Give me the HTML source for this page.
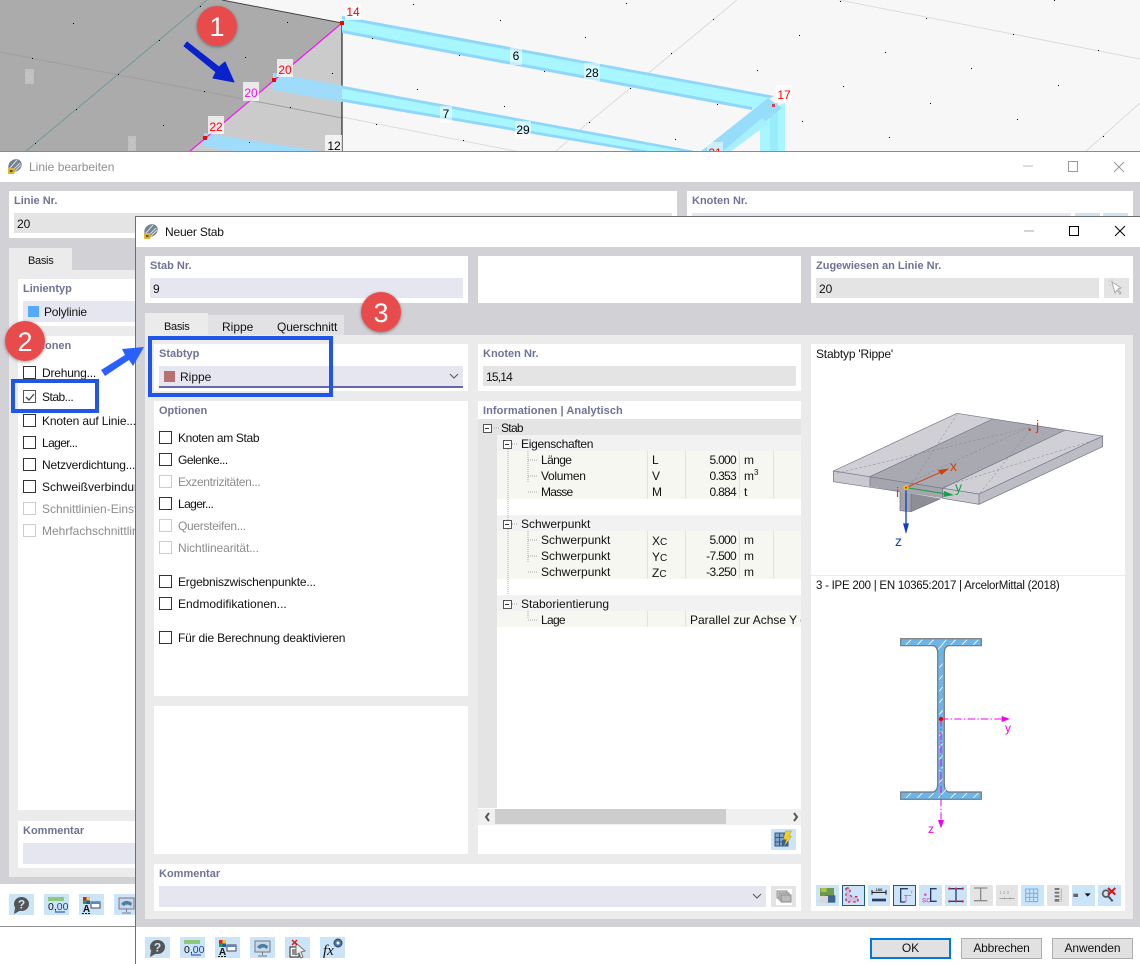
<!DOCTYPE html>
<html><head><meta charset="utf-8"><style>
html,body{margin:0;padding:0;background:#fff}
#p{position:relative;width:1140px;height:964px;overflow:hidden;font-family:"Liberation Sans",sans-serif;font-size:12px;color:#111;background:#fff}
#p div{position:absolute;box-sizing:border-box}
.t{white-space:nowrap;line-height:16px;height:16px}
.r{margin-top:1px}
.l{white-space:nowrap;line-height:16px;height:16px;font-weight:bold;font-size:11px;color:#6d7399;margin-top:1px}
.w{background:#fff}
.i{background:#e6e6f0}
.g{background:#e4e4e4}
.c{width:13px;height:13px;border:1px solid #333;background:#fff}
.d{width:13px;height:13px;border:1px solid #ccc;background:#fff}
.m{color:#8c8c8c}
.b{background:#cbe4f8}
.n{background:#e1e1e1}
.v{width:51px;text-align:right;letter-spacing:-.7px}
svg{position:absolute;left:0;top:0}
</style></head><body><div id="p">
<svg width="1140" height="152" viewBox="0 0 1140 152" style="z-index:0">
<rect width="1140" height="152" fill="#f7f7f7"/>
<polygon points="0,0 222,0 342,23 189,152 0,152" fill="#ababab"/>
<polygon points="342,23 342,152 189,152" fill="#cbcbcb"/>
<g stroke="#dcdcdc" stroke-width="1" fill="none"><line x1="839" y1="0" x2="1140" y2="59"/><line x1="737" y1="0" x2="588" y2="123"/><line x1="588" y1="123" x2="555" y2="152"/><line x1="1140" y1="103" x2="1085" y2="152"/><line x1="342" y1="117" x2="520" y2="152"/></g>
<line x1="0" y1="52" x2="342" y2="118" stroke="#9f9f9f"/>
<line x1="207" y1="0" x2="25" y2="152" stroke="#6f9c9c"/>
<line x1="222" y1="0" x2="342" y2="23" stroke="#444"/>
<line x1="342" y1="23" x2="342" y2="152" stroke="#000"/>
<polygon points="342,16 774,96 752,110 342,33" fill="#a8f6ff"/>
<polygon points="342,16 774,96 770,98 342,19" fill="#8fd6fb"/>
<polygon points="342,30 752,107 752,110 342,33" fill="#8fd6fb"/>
<polygon points="273,73 700,152 640,152 273,90" fill="#a8f6ff"/>
<polygon points="273,73 700,152 686,152 273,76" fill="#8fd6fb"/>
<polygon points="273,87 655,152 640,152 273,90" fill="#8fd6fb"/>
<polygon points="273,73 342,86 342,102 273,90" fill="#9fdcfb"/>
<polygon points="204,133 325,152 240,152 204,147" fill="#9fdcfb"/>
<polygon points="760,112 785,103 785,152 760,152" fill="#a8f6ff"/>
<rect x="770" y="103" width="8" height="49" fill="#98ecfb"/>
<polygon points="768,98 782,108 728,152 700,152" fill="#96dcfb"/>
<polygon points="762,118 768,124 730,152 722,152" fill="#a8f0ff"/>
<line x1="342" y1="23" x2="189" y2="152" stroke="#f018f0" stroke-width="1.2"/>
<g fill="#000"><rect x="73" y="23" width="1" height="1"/><rect x="32" y="58" width="1" height="1"/><rect x="159" y="40" width="1" height="1"/><rect x="287" y="22" width="1" height="1"/><rect x="245" y="57" width="1" height="1"/><rect x="118" y="74" width="1" height="1"/><rect x="204" y="91" width="1" height="1"/><rect x="332" y="73" width="1" height="1"/><rect x="76" y="109" width="1" height="1"/><rect x="163" y="125" width="1" height="1"/><rect x="290" y="107" width="1" height="1"/><rect x="35" y="143" width="1" height="1"/><rect x="249" y="142" width="1" height="1"/><rect x="200" y="6" width="1" height="1"/><rect x="500" y="20" width="1" height="1"/><rect x="372" y="38" width="1" height="1"/><rect x="459" y="55" width="1" height="1"/><rect x="544" y="71" width="1" height="1"/><rect x="417" y="89" width="1" height="1"/><rect x="504" y="106" width="1" height="1"/><rect x="376" y="124" width="1" height="1"/><rect x="463" y="140" width="1" height="1"/><rect x="413" y="4" width="1" height="1"/><rect x="626" y="3" width="1" height="1"/><rect x="585" y="37" width="1" height="1"/><rect x="713" y="19" width="1" height="1"/><rect x="671" y="53" width="1" height="1"/><rect x="799" y="35" width="1" height="1"/><rect x="757" y="70" width="1" height="1"/><rect x="630" y="88" width="1" height="1"/><rect x="717" y="104" width="1" height="1"/><rect x="589" y="122" width="1" height="1"/><rect x="675" y="139" width="1" height="1"/><rect x="840" y="1" width="1" height="1"/><rect x="926" y="18" width="1" height="1"/><rect x="885" y="52" width="1" height="1"/><rect x="1013" y="34" width="1" height="1"/><rect x="971" y="68" width="1" height="1"/><rect x="843" y="86" width="1" height="1"/><rect x="1054" y="0" width="1" height="1"/><rect x="1098" y="50" width="1" height="1"/><rect x="1058" y="85" width="1" height="1"/><rect x="930" y="103" width="1" height="1"/><rect x="802" y="121" width="1" height="1"/><rect x="1017" y="119" width="1" height="1"/><rect x="889" y="137" width="1" height="1"/><rect x="1103" y="136" width="1" height="1"/></g>
<g fill="#fff" fill-opacity=".75"><rect x="25" y="69" width="9" height="15" fill-opacity=".25"/><rect x="128" y="136" width="8" height="16" fill-opacity=".25"/><rect x="345" y="4" width="16" height="16"/><rect x="277" y="59" width="16" height="18"/><rect x="243" y="82" width="16" height="19"/><rect x="208" y="116" width="16" height="18"/><rect x="325" y="135" width="17" height="17"/><rect x="510" y="47" width="12" height="18" fill-opacity=".5"/><rect x="584" y="63" width="16" height="18" fill-opacity=".5"/><rect x="440" y="106" width="12" height="17" fill-opacity=".5"/><rect x="515" y="121" width="16" height="18" fill-opacity=".5"/><rect x="776" y="85" width="16" height="17"/><rect x="707" y="142" width="16" height="10" fill-opacity=".5"/></g>
<g fill="#f00"><rect x="340" y="21" width="4" height="4"/><rect x="272" y="78" width="4" height="4"/><rect x="203" y="136" width="4" height="4"/><rect x="772" y="104" width="3" height="3" fill="#d84050"/></g>
<g font-family="Liberation Sans,sans-serif" font-size="12" text-anchor="middle">
<text x="353" y="16" fill="#f00">14</text><text x="285" y="74" fill="#f00">20</text><text x="251" y="97" style="fill:#f010f0">20</text><text x="216" y="131" fill="#f00">22</text><text x="784" y="99" fill="#f00">17</text><text x="715" y="157" fill="#f00">21</text>
<text x="334" y="150" fill="#000">12</text><text x="516" y="60" fill="#000">6</text><text x="592" y="77" fill="#000">28</text><text x="446" y="118" fill="#000">7</text><text x="523" y="134" fill="#000">29</text>
<text x="29" y="81" fill="#c8c8c8">5</text><text x="132" y="148" fill="#c8c8c8">3</text></g>
</svg>

<!-- back window -->
<div style="left:0;top:151px;width:1140px;height:776px;background:#fff;border-top:1px solid #8a8a8a;border-bottom:1px solid #8f8f8f;z-index:1">
</div>
<div style="z-index:2;left:0;top:0;width:1140px;height:964px">
<div class="t" style="left:29px;top:159px;color:#8f8f8f">Linie bearbeiten</div>
<div style="left:0;top:182px;width:1140px;height:702px;background:#d1d1d6"></div>
<div class="w" style="left:9px;top:191px;width:668px;height:47px"></div>
<div class="l" style="left:14px;top:192px">Linie Nr.</div>
<div class="g" style="left:14px;top:213px;width:658px;height:20px"></div>
<div class="t" style="left:17px;top:216px">20</div>
<div class="w" style="left:687px;top:191px;width:446px;height:47px"></div>
<div class="l" style="left:692px;top:192px">Knoten Nr.</div>
<div class="i" style="left:692px;top:213px;width:379px;height:20px"></div>
<div class="b" style="left:1075px;top:213px;width:25px;height:20px"></div>
<div class="b" style="left:1103px;top:213px;width:25px;height:20px"></div>
<div style="left:9px;top:248px;width:63px;height:23px;background:#ebebeb"></div>
<div class="t" style="left:28px;top:253px;font-size:11px;letter-spacing:-.3px">Basis</div>
<div style="left:9px;top:270px;width:1124px;height:607px;background:#ebebeb"></div>
<div class="w" style="left:18px;top:279px;width:200px;height:47px"></div>
<div class="l" style="left:23px;top:280px">Linientyp</div>
<div class="i" style="left:23px;top:301px;width:200px;height:21px"></div>
<div style="left:28px;top:306px;width:11px;height:11px;background:#55aaff"></div>
<div class="t" style="left:44px;top:304px;letter-spacing:-.2px">Polylinie</div>
<div class="w" style="left:18px;top:336px;width:200px;height:474px"></div>
<div class="l" style="left:23px;top:337px">Optionen</div>
<div class="c" style="left:23px;top:366px"></div><div class="t" style="left:42px;top:365px;letter-spacing:-.2px">Drehung...</div>
<div class="c" style="left:23px;top:390px;border-color:#555"></div><div class="t" style="left:42px;top:389px;letter-spacing:-.5px">Stab...</div>
<div class="c" style="left:23px;top:414px"></div><div class="t" style="left:42px;top:413px;letter-spacing:-.15px">Knoten auf Linie...</div>
<div class="c" style="left:23px;top:436px"></div><div class="t" style="left:42px;top:435px;letter-spacing:-.6px">Lager...</div>
<div class="c" style="left:23px;top:458px"></div><div class="t" style="left:42px;top:457px;letter-spacing:-.2px">Netzverdichtung...</div>
<div class="c" style="left:23px;top:480px"></div><div class="t" style="left:42px;top:479px">Schweißverbindungen...</div>
<div class="d" style="left:23px;top:502px"></div><div class="t m" style="left:42px;top:501px">Schnittlinien-Einstellungen...</div>
<div class="d" style="left:23px;top:524px"></div><div class="t m" style="left:42px;top:523px">Mehrfachschnittlinien...</div>
<div class="w" style="left:18px;top:821px;width:200px;height:47px"></div>
<div class="l" style="left:23px;top:822px">Kommentar</div>
<div class="i" style="left:23px;top:843px;width:200px;height:21px"></div>
</div>

<!-- front window -->
<div style="z-index:3;left:135px;top:216px;width:1005px;height:748px;background:#fff;border-left:1px solid #6e6e6e;border-top:1px solid #6e6e6e"></div>
<div style="z-index:4;left:0;top:0;width:1140px;height:964px">
<div class="t" style="left:165px;top:224px;letter-spacing:-.2px">Neuer Stab</div>
<div style="left:136px;top:247px;width:1004px;height:680px;background:#d1d1d6"></div>
<div class="w" style="left:145px;top:256px;width:323px;height:47px"></div>
<div class="l" style="left:150px;top:257px">Stab Nr.</div>
<div class="i" style="left:150px;top:278px;width:313px;height:20px"></div>
<div class="t" style="left:153px;top:281px">9</div>
<div class="w" style="left:478px;top:256px;width:323px;height:47px"></div>
<div class="w" style="left:811px;top:256px;width:322px;height:47px"></div>
<div class="l" style="left:816px;top:257px">Zugewiesen an Linie Nr.</div>
<div class="g" style="left:816px;top:278px;width:283px;height:20px"></div>
<div class="t" style="left:819px;top:281px">20</div>
<div class="g" style="left:1104px;top:278px;width:25px;height:20px"></div>
<div style="left:145px;top:313px;width:63px;height:23px;background:#ebebeb"></div>
<div style="left:208px;top:315px;width:136px;height:21px;background:#e2e2e4"></div>
<div class="t" style="left:164px;top:319px;font-size:11px;letter-spacing:-.3px">Basis</div>
<div class="t" style="left:222px;top:319px">Rippe</div>
<div class="t" style="left:277px;top:319px;letter-spacing:-.1px">Querschnitt</div>
<div style="left:145px;top:335px;width:988px;height:584px;background:#ebebeb"></div>

<div class="w" style="left:154px;top:344px;width:314px;height:47px"></div>
<div class="l" style="left:159px;top:345px">Stabtyp</div>
<div class="i" style="left:159px;top:366px;width:304px;height:22px;border-bottom:2px solid #6666aa"></div>
<div style="left:164px;top:371px;width:11px;height:11px;background:#b87070"></div>
<div class="t" style="left:180px;top:369px">Rippe</div>
<div class="w" style="left:154px;top:401px;width:314px;height:295px"></div>
<div class="l" style="left:159px;top:402px">Optionen</div>
<div class="c" style="left:159px;top:431px"></div><div class="t" style="left:178px;top:430px;letter-spacing:-.35px">Knoten am Stab</div>
<div class="c" style="left:159px;top:453px"></div><div class="t" style="left:178px;top:452px;letter-spacing:-.5px">Gelenke...</div>
<div class="d" style="left:159px;top:475px"></div><div class="t m" style="left:178px;top:474px;letter-spacing:-.35px">Exzentrizitäten...</div>
<div class="c" style="left:159px;top:497px"></div><div class="t" style="left:178px;top:496px;letter-spacing:-.6px">Lager...</div>
<div class="d" style="left:159px;top:519px"></div><div class="t m" style="left:178px;top:518px;letter-spacing:-.3px">Quersteifen...</div>
<div class="d" style="left:159px;top:541px"></div><div class="t m" style="left:178px;top:540px;letter-spacing:-.1px">Nichtlinearität...</div>
<div class="c" style="left:159px;top:575px"></div><div class="t" style="left:178px;top:574px;letter-spacing:-.2px">Ergebniszwischenpunkte...</div>
<div class="c" style="left:159px;top:597px"></div><div class="t" style="left:178px;top:596px">Endmodifikationen...</div>
<div class="c" style="left:159px;top:631px"></div><div class="t" style="left:178px;top:630px;letter-spacing:-.2px">Für die Berechnung deaktivieren</div>
<div class="w" style="left:154px;top:706px;width:314px;height:148px"></div>
<div class="w" style="left:154px;top:864px;width:647px;height:47px"></div>
<div class="l" style="left:159px;top:865px">Kommentar</div>
<div class="i" style="left:159px;top:886px;width:607px;height:21px"></div>
<div class="g" style="left:771px;top:886px;width:25px;height:21px"></div>

<div class="w" style="left:478px;top:344px;width:323px;height:47px"></div>
<div class="l" style="left:483px;top:345px">Knoten Nr.</div>
<div class="g" style="left:483px;top:366px;width:313px;height:20px"></div>
<div class="t" style="left:486px;top:369px;letter-spacing:-.8px">15,14</div>
<div class="w" style="left:478px;top:401px;width:323px;height:453px"></div>
<div class="l" style="left:483px;top:402px;letter-spacing:.08px">Informationen | Analytisch</div>
<div class="g" style="left:478px;top:419px;width:323px;height:16px"></div>
<div class="g" style="left:478px;top:435px;width:19px;height:373px"></div>
<div style="left:497px;top:435px;width:304px;height:16px;background:#f2f2f2"></div>
<div style="left:497px;top:451px;width:304px;height:48px;background:#f6f7f1"></div>
<div style="left:497px;top:515px;width:304px;height:16px;background:#f2f2f2"></div>
<div style="left:497px;top:531px;width:304px;height:48px;background:#f6f7f1"></div>
<div style="left:497px;top:595px;width:304px;height:16px;background:#f2f2f2"></div>
<div style="left:497px;top:611px;width:304px;height:16px;background:#f6f7f1"></div>
<div class="t r" style="left:501px;top:419px;letter-spacing:-.7px">Stab</div>
<div class="t r" style="left:521px;top:435px;letter-spacing:-.3px">Eigenschaften</div>
<div class="t r" style="left:541px;top:451px;letter-spacing:-.6px">Länge</div><div class="t r" style="left:652px;top:451px">L</div><div class="t r v" style="left:685px;top:451px">5.000</div><div class="t r" style="left:744px;top:451px">m</div>
<div class="t r" style="left:541px;top:467px;letter-spacing:-.3px">Volumen</div><div class="t r" style="left:652px;top:467px">V</div><div class="t r v" style="left:685px;top:467px">0.353</div><div class="t r" style="left:744px;top:467px">m<sup style="font-size:8px;line-height:0">3</sup></div>
<div class="t r" style="left:541px;top:483px;letter-spacing:-.8px">Masse</div><div class="t r" style="left:652px;top:483px">M</div><div class="t r v" style="left:685px;top:483px">0.884</div><div class="t r" style="left:744px;top:483px">t</div>
<div class="t r" style="left:521px;top:515px">Schwerpunkt</div>
<div class="t r" style="left:541px;top:531px">Schwerpunkt</div><div class="t" style="left:652px;top:533px">X<span style="font-size:10px">C</span></div><div class="t r v" style="left:685px;top:531px">5.000</div><div class="t r" style="left:744px;top:531px">m</div>
<div class="t r" style="left:541px;top:547px">Schwerpunkt</div><div class="t" style="left:652px;top:549px">Y<span style="font-size:10px">C</span></div><div class="t r v" style="left:685px;top:547px">-7.500</div><div class="t r" style="left:744px;top:547px">m</div>
<div class="t r" style="left:541px;top:563px">Schwerpunkt</div><div class="t" style="left:652px;top:565px">Z<span style="font-size:10px">C</span></div><div class="t r v" style="left:685px;top:563px">-3.250</div><div class="t r" style="left:744px;top:563px">m</div>
<div class="t r" style="left:521px;top:595px">Staborientierung</div>
<div class="t r" style="left:541px;top:611px;letter-spacing:-.7px">Lage</div>
<div style="left:690px;top:612px;width:111px;height:16px;overflow:hidden;white-space:nowrap;line-height:16px">Parallel zur Achse Y des KS</div>
<div style="left:478px;top:809px;width:323px;height:16px;background:#f0f0f0"></div>
<div style="left:495px;top:809px;width:231px;height:15px;background:#cdcdcd"></div>
<div class="b" style="left:771px;top:829px;width:25px;height:21px"></div>

<div class="w" style="left:811px;top:344px;width:314px;height:567px"></div>
<div style="left:811px;top:575px;width:314px;height:1px;background:#ececec"></div>
<div class="t" style="left:816px;top:346px;letter-spacing:-.2px">Stabtyp 'Rippe'</div>
<div class="t" style="left:816px;top:578px;font-size:11.5px;letter-spacing:-.25px">3 - IPE 200 | EN 10365:2017 | ArcelorMittal (2018)</div>

<div class="b" style="left:816px;top:885px;width:23px;height:21px"></div>
<div class="b" style="left:842px;top:885px;width:23px;height:21px;border:1px solid #1a5a90"></div>
<div class="b" style="left:868px;top:885px;width:22px;height:21px"></div>
<div class="b" style="left:893px;top:885px;width:23px;height:21px;border:1px solid #1a5a90"></div>
<div class="b" style="left:919px;top:885px;width:23px;height:21px"></div>
<div class="b" style="left:945px;top:885px;width:22px;height:21px"></div>
<div class="g" style="left:970px;top:885px;width:23px;height:21px"></div>
<div class="g" style="left:996px;top:885px;width:22px;height:21px"></div>
<div class="b" style="left:1021px;top:885px;width:23px;height:21px"></div>
<div class="g" style="left:1047px;top:885px;width:22px;height:21px"></div>
<div class="b" style="left:1072px;top:885px;width:23px;height:21px"></div>
<div class="b" style="left:1098px;top:885px;width:23px;height:21px"></div>

<div class="b" style="left:145px;top:937px;width:25px;height:21px"></div>
<div class="b" style="left:180px;top:937px;width:25px;height:21px"></div>
<div class="b" style="left:215px;top:937px;width:25px;height:21px"></div>
<div class="b" style="left:250px;top:937px;width:25px;height:21px"></div>
<div class="b" style="left:285px;top:937px;width:25px;height:21px"></div>
<div class="b" style="left:320px;top:937px;width:25px;height:21px"></div>

<div class="n" style="left:870px;top:938px;width:81px;height:21px;border:2px solid #0078d7;text-align:center;line-height:17px">OK</div>
<div class="n" style="left:961px;top:938px;width:81px;height:21px;border:1px solid #adadad;text-align:center;line-height:19px;letter-spacing:-.2px">Abbrechen</div>
<div class="n" style="left:1052px;top:938px;width:81px;height:21px;border:1px solid #adadad;text-align:center;line-height:19px;letter-spacing:-.1px">Anwenden</div>
</div>

<!-- back-window icon buttons that remain visible -->
<div style="z-index:2;left:0;top:0;width:135px;height:964px">
<div class="b" style="left:9px;top:894px;width:25px;height:21px"></div>
<div class="b" style="left:44px;top:894px;width:25px;height:21px"></div>
<div class="b" style="left:79px;top:894px;width:25px;height:21px"></div>
<div class="b" style="left:114px;top:894px;width:21px;height:21px"></div>
</div>

<svg width="1140" height="964" viewBox="0 0 1140 964" style="z-index:6">
<defs>
<g id="barrel"><ellipse cx="8" cy="6.5" rx="7" ry="6" fill="#74828f" transform="rotate(-35 8 6.5)"/><path d="M3 9 L10 1 M6 11 L13 4 M8 12 L14 6" stroke="#d8dee6" stroke-width="1"/><rect x="1" y="9" width="6.500" height="6" rx="1" fill="#e0b030"/><rect x="3" y="11" width="2.500" height="2" fill="#6a5010"/></g>
<g id="q"><ellipse cx="12.500" cy="9" rx="7.500" ry="7" fill="#555"/><polygon points="6,13 5,19 12,15" fill="#555"/><text x="12.500" y="13.500" font-size="12" font-weight="bold" fill="#cbe4f8" text-anchor="middle" font-family="Liberation Sans,sans-serif">?</text></g>
<g id="num"><rect x="4" y="2" width="16" height="4" fill="#8ec87a"/><text x="4" y="15" font-size="10.500" fill="#111" font-family="Liberation Sans,sans-serif">0,<tspan fill="#2040a0">00</tspan></text><line x1="11" y1="17" x2="21" y2="17" stroke="#2040a0"/></g>
<g id="col"><rect x="4" y="2" width="3.500" height="3.500" fill="#e02020"/><rect x="7.500" y="2" width="3.500" height="3.500" fill="#e8d020"/><rect x="4" y="5.500" width="3.500" height="3.500" fill="#20a040"/><rect x="7.500" y="5.500" width="3.500" height="3.500" fill="#2050d0"/><rect x="12" y="7" width="9" height="6" fill="#fff" stroke="#445"/><rect x="12" y="7" width="9" height="2" fill="#5a88c0"/><text x="7.500" y="17" font-size="10" font-weight="bold" fill="#111" text-anchor="middle" font-family="Liberation Sans,sans-serif">A</text><path d="M3 18.500h9" stroke="#111" stroke-dasharray="2 1"/></g>
<g id="mon"><rect x="5" y="3" width="15" height="11" fill="#c9d8e6" stroke="#778"/><path d="M7 9c3-4 7-4 11-1l-1 3c-3-2-5-2-7 0z" fill="#4a7ea8"/><path d="M12.500 14v3M8 18h9" stroke="#778"/></g>
</defs>
<use href="#barrel" x="7" y="159"/><use href="#barrel" x="143" y="224"/>
<g stroke="#bbb" fill="none"><line x1="1023" y1="166" x2="1033" y2="166"/><rect x="1068.500" y="161.500" width="9" height="10" stroke="#999"/><path d="M1114 162l10 10M1124 162l-10 10" stroke="#999"/></g>
<g fill="none"><line x1="1024" y1="231" x2="1034" y2="231" stroke="#aaa"/><rect x="1069.500" y="226.500" width="9" height="9" stroke="#000"/><path d="M1115 226l10 10M1125 226l-10 10" stroke="#000"/></g>
<!-- check -->
<path d="M26 397l3 3 5-6" stroke="#444" fill="none" stroke-width="1.300"/>
<path d="M450 374l4 4 4-4M753 894l4 4 4-4" stroke="#555" fill="none"/>
<!-- tree -->
<g stroke="#aaa" stroke-dasharray="1 1" fill="none"><path d="M494 428h6M508 449v146M510 444h8M528 451v32M528 460h10M528 476h10M528 492h10M510 524h8M528 531v32M528 540h10M528 556h10M528 572h10M510 604h8M528 611v8M528 620h10"/></g>
<g fill="#fff" stroke="#555"><rect x="483.500" y="424.500" width="8" height="8"/><rect x="503.500" y="440.500" width="8" height="8"/><rect x="503.500" y="520.500" width="8" height="8"/><rect x="503.500" y="600.500" width="8" height="8"/></g>
<path d="M485 428.500h4M505 444.500h4M505 524.500h4M505 604.500h4" stroke="#333"/>
<g stroke="#e3e3dc"><path d="M647.500 451v48M685.500 451v48M739.500 451v48M773.500 451v48M647.500 531v48M685.500 531v48M739.500 531v48M773.500 531v48M647.500 611v16M685.500 611v16"/></g>
<path d="M489 813l-3 4 3 4M794 813l3 4-3 4" stroke="#555" stroke-width="2" fill="none"/>
<!-- table lightning icon -->
<g transform="translate(775 833)"><rect width="13" height="13" fill="#7ea6d0" stroke="#35587f"/><path d="M4.500 0v13M9 0v13M0 4.500h13M0 9h13" stroke="#35587f"/><rect x="7" y="7" width="6" height="6" fill="#3e5f88"/><path d="M11 0h6l-3 5h3l-7 10 2-7H9z" fill="#f0d030" stroke="#b89010" stroke-width=".5" transform="translate(-.5 -2)"/></g>
<g transform="translate(776 889)"><rect x="0" y="0" width="16" height="16" fill="#fff"/><rect x="1" y="2" width="10" height="7" fill="#ddd" stroke="#888"/><rect x="3" y="4" width="10" height="7" fill="#ccc" stroke="#888"/><rect x="5" y="6" width="10" height="7" fill="#bbb" stroke="#888"/></g>
<!-- cursor gray button -->
<path d="M1112 282l3 11 2-3 3 4 1-1-3-4 3-1z" fill="#fff" stroke="#aaa"/>
<path d="M1108 281h2M1109 285h2M1112 279v2" stroke="#ccc"/>
<!-- rib diagram -->
<g transform="translate(810 340) scale(.33333)" fill="none">
<polygon points="70,393 441,220 878,288 507,462" fill="#cfcfd5"/>
<polygon points="180,410 548,237 766,270 398,445" fill="#a9a9b2"/>
<polygon points="70,393 180,410 180,440 70,425" fill="#c9c9cf"/>
<polygon points="180,410 398,445 398,475 305,460 270,455 180,440" fill="#a5a5ad"/>
<polygon points="398,445 507,462 507,493 398,475" fill="#c9c9cf"/>
<polygon points="507,462 878,288 878,320 507,493" fill="#bcbcc4"/>
<polygon points="270,455 303,460 303,515 270,512" fill="#a3a3ab"/>
<polygon points="303,460 392,476 303,515" fill="#8e8e97"/>
<g stroke="#6f6f85" stroke-width="2"><polygon points="70,393 441,220 878,288 507,462"/><path d="M70,393V425L270,455M180,410V440M398,445V475L507,493V462M507,493L878,320V288M180,410L548,237M398,445L766,270M270,455V512L303,515L392,476M303,460V515"/></g>
<g stroke="#85858f" stroke-width="1.500" stroke-dasharray="8 6"><path d="M80,400L660,262M300,440L440,225M510,460L660,270M400,440L870,295M290,430L650,265"/></g>
<path d="M288 443L402 392" stroke="#d0400c" stroke-width="3"/><polygon points="418,385 384,390 394,405" fill="#d0400c"/>
<path d="M288 443L405 461" stroke="#18a048" stroke-width="3"/><polygon points="432,465 402,453 400,471" fill="#18a048"/>
<path d="M288 443V552" stroke="#1040c0" stroke-width="4"/><polygon points="288,582 279,550 297,550" fill="#1040c0"/>
<circle cx="288" cy="443" r="8" fill="#f0c020"/><circle cx="288" cy="443" r="3" fill="#d02010"/><circle cx="659" cy="269" r="4" fill="#d0400c"/>
</g>
<g font-family="Liberation Sans,sans-serif" font-size="14"><text x="1036" y="430" fill="#d0400c">j</text><text x="896" y="497" fill="#d0400c">i</text><text x="950" y="471" fill="#d0400c">x</text><text x="955" y="492" fill="#18a048">y</text><text x="895" y="546" fill="#1040c0">z</text></g>
<!-- I beam -->
<g transform="translate(810 600) scale(.33333)">
<path d="M272 116H514V137H416Q403 140 403 160V552Q403 572 416 576H514V598H272V576H370Q383 572 383 552V160Q383 140 370 137H272Z" fill="#6cb5e6" stroke="#767676" stroke-width="3.500"/>
<g stroke="#fff" stroke-width="2.500"><path d="M288 134l15-15M322 134l15-15M356 134l15-15M385 148l24-29M422 134l15-15M456 134l15-15M490 134l15-15M288 594l15-15M322 594l15-15M356 594l15-15M385 594l24-27M422 594l15-15M456 594l15-15M490 594l15-15M388 203l10-12M388 238l10-12M388 273l10-12M388 308l10-12M388 343l10-12M388 408l10-12M388 443l10-12M388 478l10-12M388 513l10-12M388 548l10-12"/></g>
<path d="M393 357H575M393 357V660" stroke="#f000f0" stroke-width="3" stroke-dasharray="22 7 4 7" fill="none"/>
<polygon points="575,348 600,357 575,366" fill="#f000f0"/><polygon points="384,660 393,685 402,660" fill="#f000f0"/>
<circle cx="393" cy="357" r="6.500" fill="#f00000"/>
</g>
<g font-family="Liberation Sans,sans-serif" font-size="12" fill="#f000f0"><text x="1005" y="732">y</text><text x="928" y="833">z</text></g>
<!-- toolbar icons -->
<g transform="translate(812 880) scale(.33333)">
<rect x="24" y="24" width="42" height="24" fill="#6c9a50"/><rect x="26" y="24" width="18" height="12" fill="#b0c040"/><rect x="40" y="46" width="30" height="22" fill="#3e648c"/><rect x="24" y="48" width="24" height="20" fill="#d8d8dc"/>
<path d="M102 24V66H138V50H122C114 50 114 44 114 24Z" fill="#cdbde8" stroke="#d02040" stroke-width="4" stroke-dasharray="7 9"/>
<path d="M180 30V44M222 30V44M180 37H222" stroke="#111" stroke-width="3" fill="none"/><rect x="180" y="56" width="42" height="8" fill="#2a3a6a"/><text x="201" y="33" font-size="12" font-weight="bold" text-anchor="middle" font-family="Liberation Sans,sans-serif" fill="#222">100</text>
<path d="M288 26H266V66H280" stroke="#2a3a6a" stroke-width="4" fill="none"/><path d="M276 46H298M282 46V66" stroke="#d040a0" stroke-width="2" fill="none"/><text x="296" y="38" font-size="11" fill="#d040a0" font-family="Liberation Sans,sans-serif">y</text>
<text x="330" y="68" font-size="19" font-weight="bold" fill="#d060a8" font-family="Liberation Sans,sans-serif">SC</text><circle cx="340" cy="44" r="4" fill="#d060a8"/><path d="M374 26H356V64H374" stroke="#2a3a6a" stroke-width="4" fill="none"/>
<path d="M412 26H452M412 64H452M432 26V64" stroke="#2a3a6a" stroke-width="4" fill="none"/><g fill="#e02040"><circle cx="412" cy="26" r="3.500"/><circle cx="452" cy="26" r="3.500"/><circle cx="432" cy="26" r="3.500"/><circle cx="412" cy="64" r="3.500"/><circle cx="452" cy="64" r="3.500"/><circle cx="432" cy="64" r="3.500"/></g>
</g>
<g transform="translate(966 880) scale(.33333)">
<path d="M24 24H64M24 62H64M44 24V62" stroke="#8a8a8a" stroke-width="4" fill="none"/>
<text x="100" y="42" font-size="13" fill="#999" font-family="Liberation Sans,sans-serif">1 2 3</text><path d="M100 55H146" stroke="#888" stroke-width="2"/><path d="M116 50v10M132 50v10" stroke="#888"/>
<g stroke="#68b4f0" stroke-width="3" fill="none"><rect x="179" y="27" width="36" height="38"/><path d="M191 27v38M203 27v38M179 40h36M179 52h36"/></g>
<g fill="#777"><rect x="266" y="24" width="14" height="6"/><rect x="266" y="35" width="14" height="6"/><rect x="266" y="46" width="14" height="6"/><rect x="266" y="57" width="14" height="8"/></g><path d="M286 26v38" stroke="#999" stroke-width="4" stroke-dasharray="3 3"/>
<rect x="322" y="41" width="14" height="10" fill="#666"/><polygon points="356,40 374,40 365,50" fill="#111"/>
<circle cx="420" cy="41" r="10" fill="none" stroke="#555" stroke-width="5"/><path d="M428 50l12 14" stroke="#555" stroke-width="6"/><path d="M426 24l22 20M448 24l-22 20" stroke="#e01010" stroke-width="6"/>
</g>
<!-- bottom icons -->
<use href="#q" x="145" y="938"/><use href="#num" x="180" y="938"/><use href="#col" x="215" y="938"/><use href="#mon" x="250" y="938"/>
<g transform="translate(285 937)"><rect x="5" y="10" width="9" height="10" fill="#fff" stroke="#222"/><path d="M7 13h5M7 15h5M7 17h5" stroke="#222"/><path d="M11 6l9 8-4 1 2 5-2 1-2-5-3 2z" fill="#eee" stroke="#777"/><path d="M7 3l5 5M12 3l-5 5" stroke="#e01010" stroke-width="1.300"/></g>
<g transform="translate(320 937)"><text x="3" y="18" font-size="15" font-style="italic" font-family="Liberation Serif,serif" fill="#111">fx</text><circle cx="18" cy="6" r="4" fill="#4a78b0" stroke="#345"/><circle cx="18" cy="6" r="1.500" fill="#fff"/></g>
</svg>
<svg width="135" height="964" viewBox="0 0 135 964" style="z-index:3">
<use href="#q" x="9" y="895"/><use href="#num" x="44" y="895"/><use href="#col" x="79" y="895"/><use href="#mon" x="114" y="895"/>
</svg>

<!-- annotations -->
<svg width="1140" height="964" viewBox="0 0 1140 964" style="z-index:8">
<defs><filter id="s" x="-30%" y="-30%" width="160%" height="160%"><feDropShadow dx="0" dy="1" stdDeviation="1.500" flood-color="#000" flood-opacity=".4"/></filter></defs>
<rect x="150" y="338" width="181" height="57" fill="none" stroke="#1f55e8" stroke-width="4"/>
<rect x="13" y="381" width="84" height="30" fill="none" stroke="#1f55e8" stroke-width="4"/>
<polygon points="184,46 187,42 219,67 225,62 234,82 213,78 216,72" fill="#0a22cc" stroke="#0a22cc" stroke-width="1" stroke-linejoin="round"/>
<polygon points="101,370 125,355 122,349 144,347 133,366 129,360 105,376" fill="#2a60ff"/>
<g filter="url(#s)" fill="#e84c4c"><circle cx="217" cy="26" r="20"/><circle cx="25" cy="341" r="20"/><circle cx="381" cy="312" r="20"/></g>
<g font-family="Liberation Sans,sans-serif" font-size="27" fill="#fff" text-anchor="middle"><text x="217" y="36">1</text><text x="25" y="351">2</text><text x="381" y="322">3</text></g>
</svg>
</div></body></html>
